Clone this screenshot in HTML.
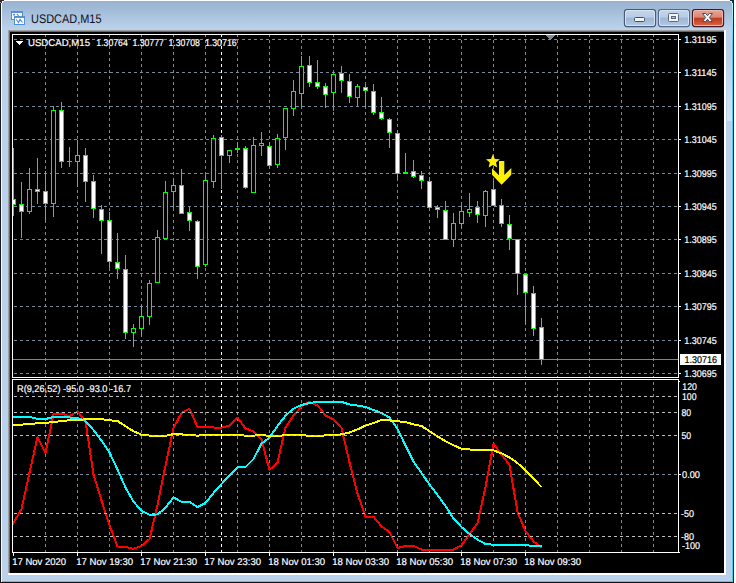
<!DOCTYPE html>
<html><head><meta charset="utf-8"><title>USDCAD,M15</title>
<style>
html,body{margin:0;padding:0;background:#ffffff;}
body{width:736px;height:583px;overflow:hidden;position:relative;font-family:"Liberation Sans",sans-serif;}
</style></head><body>
<svg width="736" height="583" viewBox="0 0 736 583" style="position:absolute;left:0;top:0" shape-rendering="crispEdges">
<defs>
<linearGradient id="tb" x1="0" y1="0" x2="0" y2="1"><stop offset="0" stop-color="#97b2cf"/><stop offset="1" stop-color="#bcd3ec"/></linearGradient>
<linearGradient id="btn" x1="0" y1="0" x2="0" y2="1"><stop offset="0" stop-color="#c4d6ec"/><stop offset="0.46" stop-color="#b7cce5"/><stop offset="0.5" stop-color="#9cb5d3"/><stop offset="1" stop-color="#b4cbe6"/></linearGradient>
<linearGradient id="cls" x1="0" y1="0" x2="0" y2="1"><stop offset="0" stop-color="#eaa99c"/><stop offset="0.46" stop-color="#d98673"/><stop offset="0.5" stop-color="#c03a1c"/><stop offset="1" stop-color="#d4694a"/></linearGradient>
<clipPath id="cm"><rect x="13" y="35" width="665" height="342"/></clipPath>
<clipPath id="ci"><rect x="13" y="380" width="665" height="172"/></clipPath>
<linearGradient id="re" gradientUnits="userSpaceOnUse" x1="0" y1="3" x2="0" y2="45"><stop offset="0" stop-color="#c4f5ff"/><stop offset="1" stop-color="#40d0f4"/></linearGradient>
<linearGradient id="glow" gradientUnits="userSpaceOnUse" x1="0" y1="58" x2="0" y2="121"><stop offset="0" stop-color="#ffffff" stop-opacity="0"/><stop offset="1" stop-color="#ffffff" stop-opacity="0.4"/></linearGradient>
</defs>
<rect x="0" y="0" width="736" height="583" fill="#ffffff"/>
<rect x="0" y="0" width="734" height="583" fill="#b9d1ea"/>
<rect x="0" y="1" width="734" height="29" fill="url(#tb)"/>
<rect x="0" y="0" width="734" height="1" fill="#ffffff"/>
<rect x="0" y="0" width="1" height="583" fill="#1c1c1c"/>
<rect x="1" y="2" width="1" height="580" fill="#f8fbfe"/>
<rect x="733" y="0" width="1" height="583" fill="#1c1c1c"/>
<rect x="732" y="3" width="1" height="579" fill="url(#re)"/>
<rect x="727" y="58" width="5" height="63" fill="url(#glow)"/>
<rect x="0" y="582" width="734" height="1" fill="#101010"/>
<rect x="2" y="581" width="731" height="1" fill="#38d4f4"/>
<rect x="0" y="0" width="4" height="1" fill="#2a2a2a"/>
<rect x="0" y="1" width="2" height="1" fill="#303030"/>
<rect x="1" y="2" width="1" height="1" fill="#303030"/>
<rect x="0" y="2" width="1" height="1" fill="#9a9a9a"/>
<rect x="2" y="1" width="2" height="1" fill="#f0f4f8"/>
<rect x="2" y="2" width="1" height="1" fill="#f0f4f8"/>
<rect x="730" y="0" width="4" height="1" fill="#0a2a30"/>
<rect x="730" y="1" width="2" height="1" fill="#c8f4ff"/>
<rect x="731" y="2" width="1" height="1" fill="#c8f4ff"/>
<rect x="732" y="1" width="1" height="2" fill="#104048"/>
<rect x="8" y="30" width="718" height="545" fill="#ffffff"/>
<rect x="8" y="30" width="716" height="543" fill="#a0a0a0"/>
<rect x="9" y="31" width="715" height="542" fill="#696969"/>
<rect x="10" y="32" width="714" height="541" fill="#000000"/>
<rect x="12" y="34" width="667" height="1" fill="#ffffff"/>
<rect x="12" y="34" width="1" height="344" fill="#ffffff"/>
<rect x="12" y="377" width="667" height="1" fill="#ffffff"/>
<rect x="678" y="34" width="1" height="344" fill="#ffffff"/>
<rect x="12" y="379" width="667" height="1" fill="#ffffff"/>
<rect x="12" y="379" width="1" height="174" fill="#ffffff"/>
<rect x="12" y="552" width="667" height="1" fill="#ffffff"/>
<rect x="678" y="379" width="1" height="174" fill="#ffffff"/>
<line x1="45.5" y1="35" x2="45.5" y2="377" stroke="#778899" stroke-width="1" stroke-dasharray="3 3" stroke-dashoffset="1"/>
<line x1="77.5" y1="35" x2="77.5" y2="377" stroke="#778899" stroke-width="1" stroke-dasharray="3 3" stroke-dashoffset="1"/>
<line x1="109.5" y1="35" x2="109.5" y2="377" stroke="#778899" stroke-width="1" stroke-dasharray="3 3" stroke-dashoffset="1"/>
<line x1="141.5" y1="35" x2="141.5" y2="377" stroke="#778899" stroke-width="1" stroke-dasharray="3 3" stroke-dashoffset="1"/>
<line x1="173.5" y1="35" x2="173.5" y2="377" stroke="#778899" stroke-width="1" stroke-dasharray="3 3" stroke-dashoffset="1"/>
<line x1="205.5" y1="35" x2="205.5" y2="377" stroke="#778899" stroke-width="1" stroke-dasharray="3 3" stroke-dashoffset="1"/>
<line x1="237.5" y1="35" x2="237.5" y2="377" stroke="#778899" stroke-width="1" stroke-dasharray="3 3" stroke-dashoffset="1"/>
<line x1="269.5" y1="35" x2="269.5" y2="377" stroke="#778899" stroke-width="1" stroke-dasharray="3 3" stroke-dashoffset="1"/>
<line x1="301.5" y1="35" x2="301.5" y2="377" stroke="#778899" stroke-width="1" stroke-dasharray="3 3" stroke-dashoffset="1"/>
<line x1="333.5" y1="35" x2="333.5" y2="377" stroke="#778899" stroke-width="1" stroke-dasharray="3 3" stroke-dashoffset="1"/>
<line x1="365.5" y1="35" x2="365.5" y2="377" stroke="#778899" stroke-width="1" stroke-dasharray="3 3" stroke-dashoffset="1"/>
<line x1="397.5" y1="35" x2="397.5" y2="377" stroke="#778899" stroke-width="1" stroke-dasharray="3 3" stroke-dashoffset="1"/>
<line x1="429.5" y1="35" x2="429.5" y2="377" stroke="#778899" stroke-width="1" stroke-dasharray="3 3" stroke-dashoffset="1"/>
<line x1="461.5" y1="35" x2="461.5" y2="377" stroke="#778899" stroke-width="1" stroke-dasharray="3 3" stroke-dashoffset="1"/>
<line x1="493.5" y1="35" x2="493.5" y2="377" stroke="#778899" stroke-width="1" stroke-dasharray="3 3" stroke-dashoffset="1"/>
<line x1="525.5" y1="35" x2="525.5" y2="377" stroke="#778899" stroke-width="1" stroke-dasharray="3 3" stroke-dashoffset="1"/>
<line x1="557.5" y1="35" x2="557.5" y2="377" stroke="#778899" stroke-width="1" stroke-dasharray="3 3" stroke-dashoffset="1"/>
<line x1="589.5" y1="35" x2="589.5" y2="377" stroke="#778899" stroke-width="1" stroke-dasharray="3 3" stroke-dashoffset="1"/>
<line x1="621.5" y1="35" x2="621.5" y2="377" stroke="#778899" stroke-width="1" stroke-dasharray="3 3" stroke-dashoffset="1"/>
<line x1="653.5" y1="35" x2="653.5" y2="377" stroke="#778899" stroke-width="1" stroke-dasharray="3 3" stroke-dashoffset="1"/>
<line x1="13" y1="39.5" x2="678" y2="39.5" stroke="#778899" stroke-width="1" stroke-dasharray="3 3" stroke-dashoffset="5"/>
<line x1="13" y1="72.5" x2="678" y2="72.5" stroke="#778899" stroke-width="1" stroke-dasharray="3 3" stroke-dashoffset="5"/>
<line x1="13" y1="106.5" x2="678" y2="106.5" stroke="#778899" stroke-width="1" stroke-dasharray="3 3" stroke-dashoffset="5"/>
<line x1="13" y1="139.5" x2="678" y2="139.5" stroke="#778899" stroke-width="1" stroke-dasharray="3 3" stroke-dashoffset="5"/>
<line x1="13" y1="173.5" x2="678" y2="173.5" stroke="#778899" stroke-width="1" stroke-dasharray="3 3" stroke-dashoffset="5"/>
<line x1="13" y1="206.5" x2="678" y2="206.5" stroke="#778899" stroke-width="1" stroke-dasharray="3 3" stroke-dashoffset="5"/>
<line x1="13" y1="239.5" x2="678" y2="239.5" stroke="#778899" stroke-width="1" stroke-dasharray="3 3" stroke-dashoffset="5"/>
<line x1="13" y1="273.5" x2="678" y2="273.5" stroke="#778899" stroke-width="1" stroke-dasharray="3 3" stroke-dashoffset="5"/>
<line x1="13" y1="306.5" x2="678" y2="306.5" stroke="#778899" stroke-width="1" stroke-dasharray="3 3" stroke-dashoffset="5"/>
<line x1="13" y1="340.5" x2="678" y2="340.5" stroke="#778899" stroke-width="1" stroke-dasharray="3 3" stroke-dashoffset="5"/>
<line x1="13" y1="373.5" x2="678" y2="373.5" stroke="#778899" stroke-width="1" stroke-dasharray="3 3" stroke-dashoffset="5"/>
<line x1="221.5" y1="35" x2="221.5" y2="377" stroke="#ffffff" stroke-width="1" stroke-dasharray="3 3" stroke-dashoffset="1"/>
<line x1="45.5" y1="380" x2="45.5" y2="552" stroke="#778899" stroke-width="1" stroke-dasharray="3 3" stroke-dashoffset="4"/>
<line x1="77.5" y1="380" x2="77.5" y2="552" stroke="#778899" stroke-width="1" stroke-dasharray="3 3" stroke-dashoffset="4"/>
<line x1="109.5" y1="380" x2="109.5" y2="552" stroke="#778899" stroke-width="1" stroke-dasharray="3 3" stroke-dashoffset="4"/>
<line x1="141.5" y1="380" x2="141.5" y2="552" stroke="#778899" stroke-width="1" stroke-dasharray="3 3" stroke-dashoffset="4"/>
<line x1="173.5" y1="380" x2="173.5" y2="552" stroke="#778899" stroke-width="1" stroke-dasharray="3 3" stroke-dashoffset="4"/>
<line x1="205.5" y1="380" x2="205.5" y2="552" stroke="#778899" stroke-width="1" stroke-dasharray="3 3" stroke-dashoffset="4"/>
<line x1="237.5" y1="380" x2="237.5" y2="552" stroke="#778899" stroke-width="1" stroke-dasharray="3 3" stroke-dashoffset="4"/>
<line x1="269.5" y1="380" x2="269.5" y2="552" stroke="#778899" stroke-width="1" stroke-dasharray="3 3" stroke-dashoffset="4"/>
<line x1="301.5" y1="380" x2="301.5" y2="552" stroke="#778899" stroke-width="1" stroke-dasharray="3 3" stroke-dashoffset="4"/>
<line x1="333.5" y1="380" x2="333.5" y2="552" stroke="#778899" stroke-width="1" stroke-dasharray="3 3" stroke-dashoffset="4"/>
<line x1="365.5" y1="380" x2="365.5" y2="552" stroke="#778899" stroke-width="1" stroke-dasharray="3 3" stroke-dashoffset="4"/>
<line x1="397.5" y1="380" x2="397.5" y2="552" stroke="#778899" stroke-width="1" stroke-dasharray="3 3" stroke-dashoffset="4"/>
<line x1="429.5" y1="380" x2="429.5" y2="552" stroke="#778899" stroke-width="1" stroke-dasharray="3 3" stroke-dashoffset="4"/>
<line x1="461.5" y1="380" x2="461.5" y2="552" stroke="#778899" stroke-width="1" stroke-dasharray="3 3" stroke-dashoffset="4"/>
<line x1="493.5" y1="380" x2="493.5" y2="552" stroke="#778899" stroke-width="1" stroke-dasharray="3 3" stroke-dashoffset="4"/>
<line x1="525.5" y1="380" x2="525.5" y2="552" stroke="#778899" stroke-width="1" stroke-dasharray="3 3" stroke-dashoffset="4"/>
<line x1="557.5" y1="380" x2="557.5" y2="552" stroke="#778899" stroke-width="1" stroke-dasharray="3 3" stroke-dashoffset="4"/>
<line x1="589.5" y1="380" x2="589.5" y2="552" stroke="#778899" stroke-width="1" stroke-dasharray="3 3" stroke-dashoffset="4"/>
<line x1="621.5" y1="380" x2="621.5" y2="552" stroke="#778899" stroke-width="1" stroke-dasharray="3 3" stroke-dashoffset="4"/>
<line x1="653.5" y1="380" x2="653.5" y2="552" stroke="#778899" stroke-width="1" stroke-dasharray="3 3" stroke-dashoffset="4"/>
<line x1="221.5" y1="380" x2="221.5" y2="552" stroke="#ffffff" stroke-width="1" stroke-dasharray="3 3" stroke-dashoffset="4"/>
<line x1="13" y1="474.5" x2="678" y2="474.5" stroke="#778899" stroke-width="1" stroke-dasharray="3 3" stroke-dashoffset="5"/>
<rect x="679" y="39" width="2" height="1" fill="#ffffff"/>
<rect x="679" y="72" width="2" height="1" fill="#ffffff"/>
<rect x="679" y="106" width="2" height="1" fill="#ffffff"/>
<rect x="679" y="139" width="2" height="1" fill="#ffffff"/>
<rect x="679" y="173" width="2" height="1" fill="#ffffff"/>
<rect x="679" y="206" width="2" height="1" fill="#ffffff"/>
<rect x="679" y="239" width="2" height="1" fill="#ffffff"/>
<rect x="679" y="273" width="2" height="1" fill="#ffffff"/>
<rect x="679" y="306" width="2" height="1" fill="#ffffff"/>
<rect x="679" y="340" width="2" height="1" fill="#ffffff"/>
<rect x="679" y="373" width="2" height="1" fill="#ffffff"/>
<rect x="13" y="359" width="665" height="1" fill="#778899"/>
<g clip-path="url(#cm)">
<rect x="13" y="148" width="1" height="68" fill="#00ff00"/>
<rect x="11" y="199" width="5" height="6" fill="#00ff00"/>
<rect x="12" y="200" width="3" height="4" fill="#ffffff"/>
<rect x="21" y="182" width="1" height="56" fill="#00ff00"/>
<rect x="19" y="204" width="5" height="8" fill="#00ff00"/>
<rect x="20" y="205" width="3" height="6" fill="#ffffff"/>
<rect x="29" y="168" width="1" height="46" fill="#00ff00"/>
<rect x="27" y="189" width="5" height="23" fill="#00ff00"/>
<rect x="28" y="190" width="3" height="21" fill="#000000"/>
<rect x="37" y="158" width="1" height="46" fill="#00ff00"/>
<rect x="35" y="189" width="5" height="3" fill="#00ff00"/>
<rect x="36" y="190" width="3" height="1" fill="#ffffff"/>
<rect x="45" y="171" width="1" height="50" fill="#00ff00"/>
<rect x="43" y="191" width="5" height="13" fill="#00ff00"/>
<rect x="44" y="192" width="3" height="11" fill="#ffffff"/>
<rect x="53" y="106" width="1" height="111" fill="#00ff00"/>
<rect x="51" y="110" width="5" height="94" fill="#00ff00"/>
<rect x="52" y="111" width="3" height="92" fill="#000000"/>
<rect x="61" y="102" width="1" height="66" fill="#00ff00"/>
<rect x="59" y="110" width="5" height="52" fill="#00ff00"/>
<rect x="60" y="111" width="3" height="50" fill="#ffffff"/>
<rect x="69" y="147" width="1" height="20" fill="#00ff00"/>
<rect x="67" y="161" width="5" height="1" fill="#00ff00"/>
<rect x="77" y="140" width="1" height="47" fill="#00ff00"/>
<rect x="75" y="155" width="5" height="7" fill="#00ff00"/>
<rect x="76" y="156" width="3" height="5" fill="#000000"/>
<rect x="85" y="148" width="1" height="54" fill="#00ff00"/>
<rect x="83" y="155" width="5" height="27" fill="#00ff00"/>
<rect x="84" y="156" width="3" height="25" fill="#ffffff"/>
<rect x="93" y="175" width="1" height="43" fill="#00ff00"/>
<rect x="91" y="181" width="5" height="28" fill="#00ff00"/>
<rect x="92" y="182" width="3" height="26" fill="#ffffff"/>
<rect x="101" y="205" width="1" height="49" fill="#00ff00"/>
<rect x="99" y="209" width="5" height="12" fill="#00ff00"/>
<rect x="100" y="210" width="3" height="10" fill="#ffffff"/>
<rect x="109" y="212" width="1" height="56" fill="#00ff00"/>
<rect x="107" y="220" width="5" height="42" fill="#00ff00"/>
<rect x="108" y="221" width="3" height="40" fill="#ffffff"/>
<rect x="117" y="233" width="1" height="46" fill="#00ff00"/>
<rect x="115" y="262" width="5" height="7" fill="#00ff00"/>
<rect x="116" y="263" width="3" height="5" fill="#ffffff"/>
<rect x="125" y="255" width="1" height="84" fill="#00ff00"/>
<rect x="123" y="269" width="5" height="64" fill="#00ff00"/>
<rect x="124" y="270" width="3" height="62" fill="#ffffff"/>
<rect x="133" y="324" width="1" height="23" fill="#00ff00"/>
<rect x="131" y="328" width="5" height="5" fill="#00ff00"/>
<rect x="132" y="329" width="3" height="3" fill="#000000"/>
<rect x="141" y="305" width="1" height="32" fill="#00ff00"/>
<rect x="139" y="316" width="5" height="13" fill="#00ff00"/>
<rect x="140" y="317" width="3" height="11" fill="#000000"/>
<rect x="149" y="280" width="1" height="45" fill="#00ff00"/>
<rect x="147" y="283" width="5" height="34" fill="#00ff00"/>
<rect x="148" y="284" width="3" height="32" fill="#000000"/>
<rect x="157" y="230" width="1" height="53" fill="#00ff00"/>
<rect x="155" y="237" width="5" height="46" fill="#00ff00"/>
<rect x="156" y="238" width="3" height="44" fill="#000000"/>
<rect x="165" y="181" width="1" height="58" fill="#00ff00"/>
<rect x="163" y="192" width="5" height="47" fill="#00ff00"/>
<rect x="164" y="193" width="3" height="45" fill="#000000"/>
<rect x="173" y="180" width="1" height="28" fill="#00ff00"/>
<rect x="171" y="185" width="5" height="7" fill="#00ff00"/>
<rect x="172" y="186" width="3" height="5" fill="#000000"/>
<rect x="181" y="169" width="1" height="45" fill="#00ff00"/>
<rect x="179" y="185" width="5" height="29" fill="#00ff00"/>
<rect x="180" y="186" width="3" height="27" fill="#ffffff"/>
<rect x="189" y="207" width="1" height="24" fill="#00ff00"/>
<rect x="187" y="212" width="5" height="9" fill="#00ff00"/>
<rect x="188" y="213" width="3" height="7" fill="#ffffff"/>
<rect x="197" y="220" width="1" height="59" fill="#00ff00"/>
<rect x="195" y="221" width="5" height="46" fill="#00ff00"/>
<rect x="196" y="222" width="3" height="44" fill="#ffffff"/>
<rect x="205" y="175" width="1" height="92" fill="#00ff00"/>
<rect x="203" y="180" width="5" height="85" fill="#00ff00"/>
<rect x="204" y="181" width="3" height="83" fill="#000000"/>
<rect x="213" y="135" width="1" height="53" fill="#00ff00"/>
<rect x="211" y="138" width="5" height="44" fill="#00ff00"/>
<rect x="212" y="139" width="3" height="42" fill="#000000"/>
<rect x="221" y="135" width="1" height="54" fill="#00ff00"/>
<rect x="219" y="137" width="5" height="19" fill="#00ff00"/>
<rect x="220" y="138" width="3" height="17" fill="#ffffff"/>
<rect x="229" y="150" width="1" height="13" fill="#00ff00"/>
<rect x="227" y="150" width="5" height="6" fill="#00ff00"/>
<rect x="228" y="151" width="3" height="4" fill="#000000"/>
<rect x="237" y="142" width="1" height="11" fill="#00ff00"/>
<rect x="235" y="148" width="5" height="2" fill="#00ff00"/>
<rect x="245" y="146" width="1" height="43" fill="#00ff00"/>
<rect x="243" y="148" width="5" height="40" fill="#00ff00"/>
<rect x="244" y="149" width="3" height="38" fill="#ffffff"/>
<rect x="253" y="137" width="1" height="56" fill="#00ff00"/>
<rect x="251" y="145" width="5" height="48" fill="#00ff00"/>
<rect x="252" y="146" width="3" height="46" fill="#000000"/>
<rect x="261" y="132" width="1" height="24" fill="#00ff00"/>
<rect x="259" y="143" width="5" height="3" fill="#00ff00"/>
<rect x="260" y="144" width="3" height="1" fill="#000000"/>
<rect x="269" y="142" width="1" height="27" fill="#00ff00"/>
<rect x="267" y="146" width="5" height="20" fill="#00ff00"/>
<rect x="268" y="147" width="3" height="18" fill="#ffffff"/>
<rect x="277" y="134" width="1" height="34" fill="#00ff00"/>
<rect x="275" y="138" width="5" height="27" fill="#00ff00"/>
<rect x="276" y="139" width="3" height="25" fill="#000000"/>
<rect x="285" y="108" width="1" height="42" fill="#00ff00"/>
<rect x="283" y="108" width="5" height="30" fill="#00ff00"/>
<rect x="284" y="109" width="3" height="28" fill="#000000"/>
<rect x="293" y="80" width="1" height="36" fill="#00ff00"/>
<rect x="291" y="91" width="5" height="18" fill="#00ff00"/>
<rect x="292" y="92" width="3" height="16" fill="#000000"/>
<rect x="301" y="56" width="1" height="51" fill="#00ff00"/>
<rect x="299" y="66" width="5" height="28" fill="#00ff00"/>
<rect x="300" y="67" width="3" height="26" fill="#000000"/>
<rect x="309" y="56" width="1" height="31" fill="#00ff00"/>
<rect x="307" y="65" width="5" height="18" fill="#00ff00"/>
<rect x="308" y="66" width="3" height="16" fill="#ffffff"/>
<rect x="317" y="60" width="1" height="29" fill="#00ff00"/>
<rect x="315" y="82" width="5" height="5" fill="#00ff00"/>
<rect x="316" y="83" width="3" height="3" fill="#ffffff"/>
<rect x="325" y="83" width="1" height="25" fill="#00ff00"/>
<rect x="323" y="86" width="5" height="9" fill="#00ff00"/>
<rect x="324" y="87" width="3" height="7" fill="#ffffff"/>
<rect x="333" y="72" width="1" height="39" fill="#00ff00"/>
<rect x="331" y="74" width="5" height="19" fill="#00ff00"/>
<rect x="332" y="75" width="3" height="17" fill="#000000"/>
<rect x="341" y="66" width="1" height="27" fill="#00ff00"/>
<rect x="339" y="73" width="5" height="8" fill="#00ff00"/>
<rect x="340" y="74" width="3" height="6" fill="#ffffff"/>
<rect x="349" y="74" width="1" height="29" fill="#00ff00"/>
<rect x="347" y="81" width="5" height="16" fill="#00ff00"/>
<rect x="348" y="82" width="3" height="14" fill="#ffffff"/>
<rect x="357" y="84" width="1" height="22" fill="#00ff00"/>
<rect x="355" y="86" width="5" height="12" fill="#00ff00"/>
<rect x="356" y="87" width="3" height="10" fill="#000000"/>
<rect x="365" y="84" width="1" height="23" fill="#00ff00"/>
<rect x="363" y="87" width="5" height="4" fill="#00ff00"/>
<rect x="364" y="88" width="3" height="2" fill="#ffffff"/>
<rect x="373" y="84" width="1" height="31" fill="#00ff00"/>
<rect x="371" y="91" width="5" height="22" fill="#00ff00"/>
<rect x="372" y="92" width="3" height="20" fill="#ffffff"/>
<rect x="381" y="97" width="1" height="23" fill="#00ff00"/>
<rect x="379" y="112" width="5" height="7" fill="#00ff00"/>
<rect x="380" y="113" width="3" height="5" fill="#ffffff"/>
<rect x="389" y="118" width="1" height="30" fill="#00ff00"/>
<rect x="387" y="119" width="5" height="14" fill="#00ff00"/>
<rect x="388" y="120" width="3" height="12" fill="#ffffff"/>
<rect x="397" y="130" width="1" height="49" fill="#00ff00"/>
<rect x="395" y="133" width="5" height="41" fill="#00ff00"/>
<rect x="396" y="134" width="3" height="39" fill="#ffffff"/>
<rect x="405" y="153" width="1" height="21" fill="#00ff00"/>
<rect x="403" y="172" width="5" height="2" fill="#00ff00"/>
<rect x="413" y="160" width="1" height="18" fill="#00ff00"/>
<rect x="411" y="171" width="5" height="6" fill="#00ff00"/>
<rect x="412" y="172" width="3" height="4" fill="#ffffff"/>
<rect x="421" y="171" width="1" height="18" fill="#00ff00"/>
<rect x="419" y="175" width="5" height="6" fill="#00ff00"/>
<rect x="420" y="176" width="3" height="4" fill="#ffffff"/>
<rect x="429" y="177" width="1" height="31" fill="#00ff00"/>
<rect x="427" y="181" width="5" height="27" fill="#00ff00"/>
<rect x="428" y="182" width="3" height="25" fill="#ffffff"/>
<rect x="437" y="205" width="1" height="13" fill="#00ff00"/>
<rect x="435" y="207" width="5" height="3" fill="#00ff00"/>
<rect x="436" y="208" width="3" height="1" fill="#ffffff"/>
<rect x="445" y="201" width="1" height="39" fill="#00ff00"/>
<rect x="443" y="210" width="5" height="30" fill="#00ff00"/>
<rect x="444" y="211" width="3" height="28" fill="#ffffff"/>
<rect x="453" y="213" width="1" height="34" fill="#00ff00"/>
<rect x="451" y="223" width="5" height="17" fill="#00ff00"/>
<rect x="452" y="224" width="3" height="15" fill="#000000"/>
<rect x="461" y="205" width="1" height="24" fill="#00ff00"/>
<rect x="459" y="211" width="5" height="13" fill="#00ff00"/>
<rect x="460" y="212" width="3" height="11" fill="#000000"/>
<rect x="469" y="193" width="1" height="24" fill="#00ff00"/>
<rect x="467" y="209" width="5" height="4" fill="#00ff00"/>
<rect x="468" y="210" width="3" height="2" fill="#000000"/>
<rect x="477" y="201" width="1" height="22" fill="#00ff00"/>
<rect x="475" y="207" width="5" height="8" fill="#00ff00"/>
<rect x="476" y="208" width="3" height="6" fill="#ffffff"/>
<rect x="485" y="190" width="1" height="37" fill="#00ff00"/>
<rect x="483" y="191" width="5" height="25" fill="#00ff00"/>
<rect x="484" y="192" width="3" height="23" fill="#000000"/>
<rect x="493" y="181" width="1" height="25" fill="#00ff00"/>
<rect x="491" y="189" width="5" height="17" fill="#00ff00"/>
<rect x="492" y="190" width="3" height="15" fill="#ffffff"/>
<rect x="501" y="199" width="1" height="28" fill="#00ff00"/>
<rect x="499" y="205" width="5" height="19" fill="#00ff00"/>
<rect x="500" y="206" width="3" height="17" fill="#ffffff"/>
<rect x="509" y="215" width="1" height="35" fill="#00ff00"/>
<rect x="507" y="224" width="5" height="15" fill="#00ff00"/>
<rect x="508" y="225" width="3" height="13" fill="#ffffff"/>
<rect x="517" y="239" width="1" height="56" fill="#00ff00"/>
<rect x="515" y="239" width="5" height="35" fill="#00ff00"/>
<rect x="516" y="240" width="3" height="33" fill="#ffffff"/>
<rect x="525" y="273" width="1" height="52" fill="#00ff00"/>
<rect x="523" y="274" width="5" height="19" fill="#00ff00"/>
<rect x="524" y="275" width="3" height="17" fill="#ffffff"/>
<rect x="533" y="286" width="1" height="50" fill="#00ff00"/>
<rect x="531" y="293" width="5" height="36" fill="#00ff00"/>
<rect x="532" y="294" width="3" height="34" fill="#ffffff"/>
<rect x="541" y="318" width="1" height="47" fill="#00ff00"/>
<rect x="539" y="327" width="5" height="33" fill="#00ff00"/>
<rect x="540" y="328" width="3" height="31" fill="#ffffff"/>
</g>
<g shape-rendering="geometricPrecision">
<polygon fill="#fff200" points="492.90,154.30 494.84,158.93 499.84,159.34 496.04,162.62 497.19,167.51 492.90,164.90 488.61,167.51 489.76,162.62 485.96,159.34 490.96,158.93"/>
<polygon fill="#fff200" points="499,161 504.3,161 504.3,175 511.3,168 511.3,174.8 501.6,184.8 492,174.8 492,168.2 499,175.3"/>
</g>
<g clip-path="url(#ci)">
<polyline fill="none" stroke="#ff0000" stroke-width="2" stroke-linejoin="round" points="5.5,537.00 13.5,523.00 21.5,509.00 29.5,472.60 37.5,437.00 45.5,453.00 53.5,414.40 61.5,413.50 69.5,416.25 77.5,411.50 85.5,421.25 93.5,474.50 101.5,500.50 109.5,525.00 117.5,546.50 125.5,547.00 133.5,548.75 141.5,546.00 149.5,539.00 157.5,505.00 165.5,465.75 173.5,428.00 181.5,413.00 189.5,408.75 197.5,427.00 205.5,427.00 213.5,427.50 221.5,427.75 229.5,425.60 237.5,417.75 245.5,428.50 253.5,431.25 261.5,439.40 269.5,470.00 277.5,462.50 285.5,427.50 293.5,415.60 301.5,406.50 309.5,401.90 317.5,405.25 325.5,415.60 333.5,419.40 341.5,428.00 349.5,462.50 357.5,493.50 365.5,516.75 373.5,516.75 381.5,526.50 389.5,532.00 397.5,548.00 405.5,546.00 413.5,545.75 421.5,549.60 429.5,549.60 437.5,549.60 445.5,549.60 453.5,549.60 461.5,545.25 469.5,534.00 477.5,523.40 485.5,487.00 493.5,443.75 501.5,454.40 509.5,465.00 517.5,512.00 525.5,531.25 533.5,541.25 541.5,547.75"/>
<polyline fill="none" stroke="#00ffff" stroke-width="2" stroke-linejoin="round" points="5.5,417.00 13.5,417.00 21.5,417.00 29.5,417.00 37.5,418.75 45.5,419.00 53.5,417.00 61.5,417.00 69.5,417.50 77.5,418.00 85.5,421.00 93.5,430.00 101.5,440.50 109.5,452.50 117.5,469.50 125.5,487.50 133.5,501.50 141.5,511.00 149.5,514.60 157.5,514.50 165.5,507.70 173.5,497.50 181.5,501.75 189.5,502.00 197.5,507.00 205.5,503.00 213.5,493.00 221.5,484.00 229.5,475.60 237.5,467.50 245.5,467.00 253.5,459.00 261.5,443.75 269.5,437.50 277.5,426.00 285.5,415.60 293.5,408.75 301.5,405.00 309.5,403.00 317.5,401.90 325.5,401.60 333.5,401.60 341.5,401.90 349.5,404.40 357.5,405.60 365.5,406.90 373.5,410.00 381.5,413.00 389.5,417.50 397.5,428.75 405.5,445.50 413.5,461.50 421.5,473.00 429.5,484.50 437.5,495.00 445.5,506.00 453.5,518.40 461.5,527.00 469.5,534.00 477.5,539.60 485.5,544.00 493.5,544.70 501.5,545.00 509.5,545.00 517.5,545.00 525.5,545.20 533.5,545.90 541.5,545.90"/>
<polyline fill="none" stroke="#ffff00" stroke-width="2" stroke-linejoin="round" points="5.5,425.00 13.5,425.00 21.5,424.75 29.5,423.75 37.5,423.40 45.5,422.75 53.5,422.25 61.5,421.00 69.5,420.25 77.5,419.75 85.5,419.40 93.5,419.10 101.5,419.20 109.5,420.25 117.5,421.00 125.5,426.25 133.5,431.25 141.5,434.60 149.5,435.60 157.5,435.90 165.5,435.90 173.5,434.00 181.5,434.40 189.5,435.00 197.5,435.60 205.5,435.00 213.5,435.00 221.5,435.00 229.5,435.00 237.5,435.20 245.5,435.60 253.5,435.60 261.5,435.00 269.5,436.00 277.5,435.90 285.5,435.25 293.5,435.00 301.5,435.00 309.5,435.90 317.5,435.90 325.5,435.40 333.5,435.00 341.5,434.40 349.5,432.50 357.5,429.40 365.5,425.60 373.5,423.00 381.5,420.00 389.5,420.40 397.5,421.25 405.5,422.00 413.5,424.40 421.5,426.00 429.5,431.25 437.5,436.40 445.5,441.25 453.5,445.25 461.5,448.75 469.5,449.50 477.5,450.00 485.5,450.00 493.5,450.40 501.5,453.30 509.5,457.50 517.5,463.00 525.5,470.60 533.5,478.75 541.5,487.00"/>
</g>
<line x1="13" y1="396.5" x2="678" y2="396.5" stroke="#c0c0c0" stroke-width="1" stroke-dasharray="3 3" stroke-dashoffset="5"/>
<line x1="13" y1="412.5" x2="678" y2="412.5" stroke="#c0c0c0" stroke-width="1" stroke-dasharray="3 3" stroke-dashoffset="5"/>
<line x1="13" y1="435.5" x2="678" y2="435.5" stroke="#c0c0c0" stroke-width="1" stroke-dasharray="3 3" stroke-dashoffset="5"/>
<line x1="13" y1="513.5" x2="678" y2="513.5" stroke="#c0c0c0" stroke-width="1" stroke-dasharray="3 3" stroke-dashoffset="5"/>
<line x1="13" y1="536.5" x2="678" y2="536.5" stroke="#c0c0c0" stroke-width="1" stroke-dasharray="3 3" stroke-dashoffset="5"/>
<rect x="679" y="381" width="1" height="1" fill="#ffffff"/>
<rect x="679" y="552" width="1" height="1" fill="#ffffff"/>
<rect x="679" y="474" width="2" height="1" fill="#ffffff"/>
<rect x="13" y="553" width="1" height="3" fill="#ffffff"/>
<rect x="77" y="553" width="1" height="3" fill="#ffffff"/>
<rect x="141" y="553" width="1" height="3" fill="#ffffff"/>
<rect x="205" y="553" width="1" height="3" fill="#ffffff"/>
<rect x="269" y="553" width="1" height="3" fill="#ffffff"/>
<rect x="333" y="553" width="1" height="3" fill="#ffffff"/>
<rect x="397" y="553" width="1" height="3" fill="#ffffff"/>
<rect x="461" y="553" width="1" height="3" fill="#ffffff"/>
<rect x="525" y="553" width="1" height="3" fill="#ffffff"/>
<rect x="680" y="354" width="41" height="11" fill="#ffffff"/>
<polygon fill="#ffffff" points="16,41 23,41 19.5,45"/>
<polygon fill="#7a8b9c" points="545,35 555,35 550,40"/>
<g shape-rendering="geometricPrecision">
<rect x="624.5" y="9.5" width="31" height="17" rx="2.5" ry="2.5" fill="url(#btn)" stroke="#47587a" stroke-width="1.25"/><rect x="625.5" y="10.5" width="29" height="15" rx="2" ry="2" fill="none" stroke="#d6e4f4" stroke-width="1"/>
<rect x="658.5" y="9.5" width="31" height="17" rx="2.5" ry="2.5" fill="url(#btn)" stroke="#55688a" stroke-width="1.25"/><rect x="659.5" y="10.5" width="29" height="15" rx="2" ry="2" fill="none" stroke="#d6e4f4" stroke-width="1"/>
<rect x="692.5" y="9.5" width="31" height="17" rx="2.5" ry="2.5" fill="url(#cls)" stroke="#4b1622" stroke-width="1.25"/><rect x="693.5" y="10.5" width="29" height="15" rx="2" ry="2" fill="none" stroke="#f0b8ac" stroke-width="1"/>
<rect x="634.5" y="17.5" width="10" height="4" rx="1" fill="#f4f4f4" stroke="#454f63" stroke-width="1"/>
<rect x="668.5" y="13.5" width="10" height="8" rx="1" fill="#f4f4f4" stroke="#5b6880" stroke-width="1"/>
<rect x="671.5" y="16.5" width="4" height="2" fill="#a9bdd8" stroke="#5b6880" stroke-width="1"/>
<path d="M702.5,13.5 L705.7,13.5 L707.5,15.7 L709.3,13.5 L712.5,13.5 L709.4,17.5 L712.5,21.5 L709.3,21.5 L707.5,19.3 L705.7,21.5 L702.5,21.5 L705.6,17.5 Z" fill="#fafafa" stroke="#4a4e60" stroke-width="1" stroke-linejoin="round"/>
</g>
<g shape-rendering="crispEdges">
<rect x="11" y="11" width="12" height="9" fill="#5a8ef0"/>
<rect x="12" y="13" width="10" height="6" fill="#ffffff"/>
<rect x="14" y="16" width="11" height="9" fill="#5a8ef0"/>
<rect x="15" y="18" width="9" height="6" fill="#ffffff"/>
<line x1="11" y1="11.5" x2="23" y2="11.5" stroke="#3f9a86" stroke-width="1" stroke-dasharray="1 2" stroke-dashoffset="0"/>
<line x1="11.5" y1="12" x2="11.5" y2="20" stroke="#3f9a86" stroke-width="1" stroke-dasharray="1 2"/>
<line x1="14" y1="16.5" x2="25" y2="16.5" stroke="#3f9a86" stroke-width="1" stroke-dasharray="1 2" stroke-dashoffset="1"/>
<line x1="14.5" y1="17" x2="14.5" y2="25" stroke="#3f9a86" stroke-width="1" stroke-dasharray="1 2"/>
<line x1="24.5" y1="17" x2="24.5" y2="25" stroke="#3f9a86" stroke-width="1" stroke-dasharray="1 2"/>
<line x1="14" y1="24.5" x2="25" y2="24.5" stroke="#3f9a86" stroke-width="1" stroke-dasharray="1 2"/>
<line x1="22.5" y1="12" x2="22.5" y2="16" stroke="#3f9a86" stroke-width="1" stroke-dasharray="1 2"/>
</g>
<g shape-rendering="geometricPrecision" fill="none" stroke="#4a84f4" stroke-width="1.1">
<path d="M13,15.3 L14.3,14.3 L15,15"/>
<path d="M17,14 L18.5,15.8"/>
<path d="M16.3,19.3 L18.5,22.7 L20.1,19.3 L22.5,22.5"/>
</g>
<g font-family="'Liberation Sans', sans-serif" shape-rendering="geometricPrecision" text-rendering="geometricPrecision">
<text x="31" y="23" font-size="12.5" fill="#101020" stroke="#101020" stroke-width="0" text-anchor="start" textLength="70.5" lengthAdjust="spacingAndGlyphs">USDCAD,M15</text>
<text x="28" y="46" font-size="9.8" fill="#ffffff" stroke="#ffffff" stroke-width="0.2" text-anchor="start" textLength="62" lengthAdjust="spacingAndGlyphs">USDCAD,M15</text>
<text x="96.3" y="46" font-size="9.8" fill="#ffffff" stroke="#ffffff" stroke-width="0.2" text-anchor="start" textLength="31.5" lengthAdjust="spacingAndGlyphs">1.30764</text>
<text x="132.4" y="46" font-size="9.8" fill="#ffffff" stroke="#ffffff" stroke-width="0.2" text-anchor="start" textLength="31.5" lengthAdjust="spacingAndGlyphs">1.30777</text>
<text x="168.4" y="46" font-size="9.8" fill="#ffffff" stroke="#ffffff" stroke-width="0.2" text-anchor="start" textLength="31.5" lengthAdjust="spacingAndGlyphs">1.30708</text>
<text x="204.9" y="46" font-size="9.8" fill="#ffffff" stroke="#ffffff" stroke-width="0.2" text-anchor="start" textLength="31.8" lengthAdjust="spacingAndGlyphs">1.30716</text>
<text x="684.2" y="43" font-size="9.8" fill="#ffffff" stroke="#ffffff" stroke-width="0.2" text-anchor="start" textLength="32.5" lengthAdjust="spacingAndGlyphs">1.31195</text>
<text x="684.2" y="76" font-size="9.8" fill="#ffffff" stroke="#ffffff" stroke-width="0.2" text-anchor="start" textLength="32.5" lengthAdjust="spacingAndGlyphs">1.31145</text>
<text x="684.2" y="110" font-size="9.8" fill="#ffffff" stroke="#ffffff" stroke-width="0.2" text-anchor="start" textLength="32.5" lengthAdjust="spacingAndGlyphs">1.31095</text>
<text x="684.2" y="143" font-size="9.8" fill="#ffffff" stroke="#ffffff" stroke-width="0.2" text-anchor="start" textLength="32.5" lengthAdjust="spacingAndGlyphs">1.31045</text>
<text x="684.2" y="177" font-size="9.8" fill="#ffffff" stroke="#ffffff" stroke-width="0.2" text-anchor="start" textLength="32.5" lengthAdjust="spacingAndGlyphs">1.30995</text>
<text x="684.2" y="210" font-size="9.8" fill="#ffffff" stroke="#ffffff" stroke-width="0.2" text-anchor="start" textLength="32.5" lengthAdjust="spacingAndGlyphs">1.30945</text>
<text x="684.2" y="243" font-size="9.8" fill="#ffffff" stroke="#ffffff" stroke-width="0.2" text-anchor="start" textLength="32.5" lengthAdjust="spacingAndGlyphs">1.30895</text>
<text x="684.2" y="277" font-size="9.8" fill="#ffffff" stroke="#ffffff" stroke-width="0.2" text-anchor="start" textLength="32.5" lengthAdjust="spacingAndGlyphs">1.30845</text>
<text x="684.2" y="310" font-size="9.8" fill="#ffffff" stroke="#ffffff" stroke-width="0.2" text-anchor="start" textLength="32.5" lengthAdjust="spacingAndGlyphs">1.30795</text>
<text x="684.2" y="344" font-size="9.8" fill="#ffffff" stroke="#ffffff" stroke-width="0.2" text-anchor="start" textLength="32.5" lengthAdjust="spacingAndGlyphs">1.30745</text>
<text x="684.2" y="377" font-size="9.8" fill="#ffffff" stroke="#ffffff" stroke-width="0.2" text-anchor="start" textLength="32.5" lengthAdjust="spacingAndGlyphs">1.30695</text>
<text x="684.4" y="363" font-size="9.8" fill="#000000" stroke="#000000" stroke-width="0.2" text-anchor="start" textLength="32.5" lengthAdjust="spacingAndGlyphs">1.30716</text>
<text x="17" y="392" font-size="9.8" fill="#ffffff" stroke="#ffffff" stroke-width="0.2" text-anchor="start" textLength="114" lengthAdjust="spacingAndGlyphs">R(9,26,52) -95.0 -93.0 -16.7</text>
<text x="682.3" y="390" font-size="9.8" fill="#ffffff" stroke="#ffffff" stroke-width="0.2" text-anchor="start" textLength="14.5" lengthAdjust="spacingAndGlyphs">120</text>
<text x="682" y="400" font-size="9.8" fill="#ffffff" stroke="#ffffff" stroke-width="0.2" text-anchor="start" textLength="14.5" lengthAdjust="spacingAndGlyphs">100</text>
<text x="681.5" y="416" font-size="9.8" fill="#ffffff" stroke="#ffffff" stroke-width="0.2" text-anchor="start" textLength="9.7" lengthAdjust="spacingAndGlyphs">80</text>
<text x="681.5" y="439" font-size="9.8" fill="#ffffff" stroke="#ffffff" stroke-width="0.2" text-anchor="start" textLength="9.7" lengthAdjust="spacingAndGlyphs">50</text>
<text x="682" y="478" font-size="9.8" fill="#ffffff" stroke="#ffffff" stroke-width="0.2" text-anchor="start" textLength="18" lengthAdjust="spacingAndGlyphs">0.00</text>
<text x="681" y="517" font-size="9.8" fill="#ffffff" stroke="#ffffff" stroke-width="0.2" text-anchor="start" textLength="13" lengthAdjust="spacingAndGlyphs">-50</text>
<text x="681" y="540" font-size="9.8" fill="#ffffff" stroke="#ffffff" stroke-width="0.2" text-anchor="start" textLength="13" lengthAdjust="spacingAndGlyphs">-80</text>
<text x="682" y="549" font-size="9.8" fill="#ffffff" stroke="#ffffff" stroke-width="0.2" text-anchor="start" textLength="18" lengthAdjust="spacingAndGlyphs">-100</text>
<text x="12.3" y="565" font-size="9.8" fill="#ffffff" stroke="#ffffff" stroke-width="0.2" text-anchor="start" textLength="53.7" lengthAdjust="spacingAndGlyphs">17 Nov 2020</text>
<text x="76.3" y="565" font-size="9.8" fill="#ffffff" stroke="#ffffff" stroke-width="0.2" text-anchor="start" textLength="56.7" lengthAdjust="spacingAndGlyphs">17 Nov 19:30</text>
<text x="140.3" y="565" font-size="9.8" fill="#ffffff" stroke="#ffffff" stroke-width="0.2" text-anchor="start" textLength="56.7" lengthAdjust="spacingAndGlyphs">17 Nov 21:30</text>
<text x="204.3" y="565" font-size="9.8" fill="#ffffff" stroke="#ffffff" stroke-width="0.2" text-anchor="start" textLength="56.7" lengthAdjust="spacingAndGlyphs">17 Nov 23:30</text>
<text x="268.3" y="565" font-size="9.8" fill="#ffffff" stroke="#ffffff" stroke-width="0.2" text-anchor="start" textLength="56.7" lengthAdjust="spacingAndGlyphs">18 Nov 01:30</text>
<text x="332.3" y="565" font-size="9.8" fill="#ffffff" stroke="#ffffff" stroke-width="0.2" text-anchor="start" textLength="56.7" lengthAdjust="spacingAndGlyphs">18 Nov 03:30</text>
<text x="396.3" y="565" font-size="9.8" fill="#ffffff" stroke="#ffffff" stroke-width="0.2" text-anchor="start" textLength="56.7" lengthAdjust="spacingAndGlyphs">18 Nov 05:30</text>
<text x="460.3" y="565" font-size="9.8" fill="#ffffff" stroke="#ffffff" stroke-width="0.2" text-anchor="start" textLength="56.7" lengthAdjust="spacingAndGlyphs">18 Nov 07:30</text>
<text x="524.3" y="565" font-size="9.8" fill="#ffffff" stroke="#ffffff" stroke-width="0.2" text-anchor="start" textLength="56.7" lengthAdjust="spacingAndGlyphs">18 Nov 09:30</text>
</g>
</svg>
</body></html>
